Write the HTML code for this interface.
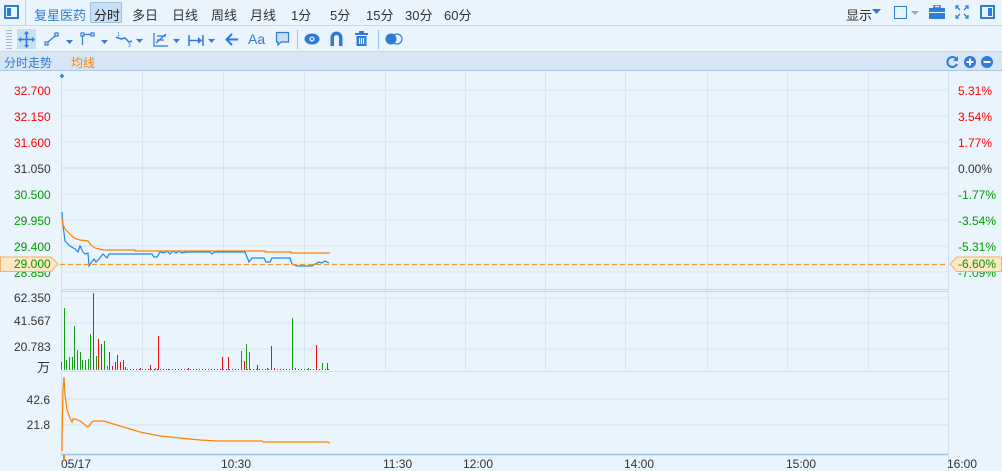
<!DOCTYPE html>
<html><head><meta charset="utf-8"><style>
*{margin:0;padding:0;box-sizing:border-box}
body{width:1002px;height:471px;background:#eaf4fc;font-family:"Liberation Sans","Noto Sans CJK SC",sans-serif;position:relative;overflow:hidden;font-size:12px;color:#333}
.a{position:absolute;white-space:nowrap}
.t1{font-size:13px}
.l{width:36px;text-align:right}
</style></head><body>
<!-- toolbar row 1 -->
<div class="a" style="left:0;top:0;width:1002px;height:26px;border-bottom:1px solid #c5daee"></div>
<div class="a" style="left:25px;top:0;width:1px;height:26px;background:#b8d0e8"></div>
<div class="a" style="left:4px;top:5px;width:15px;height:14px;border:2px solid #2f7bd6"></div>
<div class="a" style="left:7px;top:8px;width:4px;height:8px;background:#2f7bd6"></div>
<div class="a t1" style="left:34px;top:5px;color:#2f7bd6">复星医药</div>
<div class="a" style="left:90px;top:2px;width:32px;height:21px;background:#c8def4;border:1px solid #9fc1e6;border-radius:2px"></div>
<div class="a t1" style="left:94px;top:5px;color:#222">分时</div>
<div class="a t1" style="left:132px;top:5px">多日</div>
<div class="a t1" style="left:172px;top:5px">日线</div>
<div class="a t1" style="left:211px;top:5px">周线</div>
<div class="a t1" style="left:250px;top:5px">月线</div>
<div class="a t1" style="left:291px;top:5px">1分</div>
<div class="a t1" style="left:330px;top:5px">5分</div>
<div class="a t1" style="left:366px;top:5px">15分</div>
<div class="a t1" style="left:405px;top:5px">30分</div>
<div class="a t1" style="left:444px;top:5px">60分</div>
<div class="a t1" style="left:846px;top:5px">显示</div>
<svg class="a" style="left:872px;top:9px" width="9" height="5"><path d="M0 0H9L4.5 5z" fill="#2f7bd6"/></svg>
<div class="a" style="left:894px;top:6px;width:13px;height:13px;border:1.5px solid #2f7bd6"></div>
<svg class="a" style="left:911px;top:11px" width="8" height="4"><path d="M0 0H8L4 4z" fill="#8fa8c4"/></svg>
<svg class="a" style="left:929px;top:5px" width="16" height="15"><rect x="5" y="0" width="6" height="3" fill="none" stroke="#2f7bd6" stroke-width="1.5"/><rect x="0" y="3" width="16" height="11" fill="#2f7bd6"/><rect x="0" y="7" width="16" height="1" fill="#eaf4fc"/></svg>
<svg class="a" style="left:955px;top:5px" width="14" height="14" stroke="#2f7bd6" stroke-width="1.3" fill="none"><path d="M1 4V1H4M10 1H13V4M13 10V13H10M4 13H1V10M2 2L5 5M12 2L9 5M12 12L9 9M2 12L5 9"/></svg>
<div class="a" style="left:980px;top:5px;width:15px;height:14px;border:2px solid #2f7bd6"></div>
<div class="a" style="left:988px;top:8px;width:4px;height:8px;background:#2f7bd6"></div>
<!-- toolbar row 2 -->
<div class="a" style="left:0;top:26px;width:1002px;height:26px;border-bottom:1px solid #c5daee"></div>
<svg class="a" style="left:6px;top:30px" width="6" height="19"><g fill="#9fb6cf"><rect y="0" width="6" height="1"/><rect y="3" width="6" height="1"/><rect y="6" width="6" height="1"/><rect y="9" width="6" height="1"/><rect y="12" width="6" height="1"/><rect y="15" width="6" height="1"/><rect y="18" width="6" height="1"/></g></svg>
<div class="a" style="left:17px;top:29px;width:19px;height:20px;background:#c8def4"></div>
<svg class="a" style="left:18px;top:31px" width="17" height="17" stroke="#2f7bd6" stroke-width="1.6" fill="#2f7bd6"><path d="M8.5 1V16M1 8.5H16" fill="none"/><path d="M8.5 0L6 3H11zM8.5 17L6 14H11zM0 8.5L3 6V11zM17 8.5L14 6V11z" stroke="none"/></svg>
<svg class="a" style="left:44px;top:32px" width="30" height="16" fill="none" stroke="#2f7bd6" stroke-width="1.2"><rect x="1" y="10" width="3" height="3"/><rect x="11" y="1" width="3" height="3"/><path d="M4 10L11 4"/><path d="M22 8H29L25.5 12z" fill="#2f7bd6" stroke="none"/></svg>
<svg class="a" style="left:80px;top:32px" width="30" height="16" fill="none" stroke="#2f7bd6" stroke-width="1.2"><rect x="1" y="1" width="3" height="3"/><rect x="11" y="1" width="3" height="3"/><path d="M4 2.5H11M2.5 4V13"/><path d="M21 8H28L24.5 12z" fill="#2f7bd6" stroke="none"/></svg>
<svg class="a" style="left:115px;top:31px" width="30" height="17" fill="none" stroke="#2f7bd6" stroke-width="1.5"><path d="M1 6L6 8L10 7L14 11L17 10"/><text x="2" y="5" font-size="5" fill="#2f7bd6" stroke="none">1</text><text x="13" y="16" font-size="5" fill="#2f7bd6" stroke="none">3</text><path d="M21 8H28L24.5 12z" fill="#2f7bd6" stroke="none"/></svg>
<svg class="a" style="left:152px;top:31px" width="30" height="17" fill="none" stroke="#2f7bd6" stroke-width="1.2"><path d="M2 2V15H16M4 12L14 3M5 5H14M5 9H12" /><path d="M21 8H28L24.5 12z" fill="#2f7bd6" stroke="none"/></svg>
<svg class="a" style="left:188px;top:32px" width="30" height="16" fill="none" stroke="#2f7bd6" stroke-width="1.5"><path d="M1 3V14M15 3V14M1 8.5H14"/><path d="M14 8.5L10 5V12z" fill="#2f7bd6" stroke="none"/><path d="M20 7H27L23.5 11z" fill="#2f7bd6" stroke="none"/></svg>
<svg class="a" style="left:225px;top:33px" width="14" height="13" fill="none" stroke="#2f7bd6" stroke-width="2"><path d="M13 6.5H2M7 1L1.5 6.5L7 12"/></svg>
<div class="a" style="left:248px;top:31px;font-size:14px;color:#2f7bd6">Aa</div>
<svg class="a" style="left:275px;top:31px" width="15" height="16" fill="#c8def4" stroke="#2f7bd6" stroke-width="1.2"><path d="M1.5 1.5H13.5V11H6L3 14V11H1.5z"/></svg>
<div class="a" style="left:297px;top:30px;width:1px;height:19px;background:#9fc1e6"></div>
<svg class="a" style="left:304px;top:33px" width="16" height="12"><ellipse cx="8" cy="6" rx="7.5" ry="5.5" fill="#2f7bd6"/><circle cx="8" cy="6" r="2.5" fill="#eaf4fc"/><circle cx="8" cy="6" r="1.2" fill="#2f7bd6"/></svg>
<svg class="a" style="left:330px;top:31px" width="13" height="15"><path d="M0.5 15V6.5A6 6 0 0 1 12.5 6.5V15H9V6.5A2.5 2.5 0 0 0 4 6.5V15z" fill="#2f7bd6"/></svg>
<svg class="a" style="left:355px;top:31px" width="13" height="15" fill="#2f7bd6"><rect x="0" y="2" width="13" height="2"/><rect x="4" y="0" width="5" height="2"/><path d="M1.5 5H11.5V15H1.5z"/><g fill="#eaf4fc"><rect x="4" y="7" width="1.2" height="6"/><rect x="6" y="7" width="1.2" height="6"/><rect x="8" y="7" width="1.2" height="6"/></g></svg>
<div class="a" style="left:378px;top:30px;width:1px;height:19px;background:#9fc1e6"></div>
<svg class="a" style="left:385px;top:33px" width="18" height="12"><circle cx="6" cy="6" r="5.5" fill="#2f7bd6"/><circle cx="12" cy="6" r="5" fill="none" stroke="#2f7bd6" stroke-width="1.2"/></svg>
<!-- sub header -->
<div class="a" style="left:0;top:52px;width:1002px;height:19px;background:#d6e6f5;border-bottom:1px solid #a9c6e6"></div>
<div class="a" style="left:4px;top:54px;color:#2f7bd6">分时走势</div>
<div class="a" style="left:71px;top:54px;color:#ff7f00">均线</div>
<svg class="a" style="left:946px;top:55px" width="52" height="14"><path d="M10 3.5A5 5 0 1 0 11 9" fill="none" stroke="#2f7bd6" stroke-width="2"/><path d="M12 1V6H7z" fill="#2f7bd6"/><circle cx="24" cy="7" r="6" fill="#2f7bd6"/><rect x="20.5" y="6" width="7" height="2" fill="#fff"/><rect x="23" y="3.5" width="2" height="7" fill="#fff"/><circle cx="41" cy="7" r="6" fill="#2f7bd6"/><rect x="37.5" y="6" width="7" height="2" fill="#fff"/></svg>
<!-- hidden-under labels -->
<div class="a l" style="left:14px;top:266px;color:#090">28.850</div>
<div class="a" style="left:958px;top:266px;color:#090">-7.09%</div>
<!-- chart -->
<svg class="a" style="left:0;top:0;z-index:1" width="1002" height="471">
<g stroke="#d6e6f4" stroke-width="1">
<path d="M61 90H948M61 116H948M61 142H948M61 194H948M61 220H948M61 246H948M61 272H948"/>
<path d="M61 298H948M61 323H948M61 349H948"/>
<path d="M61 399H948M61 425H948"/>
<path d="M142.5 71V370M223.5 71V370M304.5 71V370M385.5 71V370M465.5 71V370M545.5 71V370M625.5 71V370M707.5 71V370M787.5 71V370M868.5 71V370"/>
</g>
<path d="M61 168H948" stroke="#c6d9ec"/>
<path d="M61.5 71V454M948.5 71V471" stroke="#d0e0f0"/>
<path d="M61 289.5H948M61 291.5H948" stroke="#c2d6ea"/>
<path d="M61 371.5H948" stroke="#d0e0f0"/>
<path d="M61 454.5H948" stroke="#9cc4e8" stroke-width="1.5"/>
<path d="M60 76H64M62 74V78" stroke="#2f7bd6" stroke-width="1.5"/>
<path d="M62 212L63 225L65 241L67 243L70 246L75 249L78 252L80 246L83 252L85 254L88 253L89 266L91 263L94 259L96 262L99 259L103 254L107 258L109 254L152 254L154 257L157 257L160 252L164 253L167 251L170 254L173 251L176 253L179 251L182 253L186 252L210 252L212 254L215 252L245 252L249 262L252 258L264 258L266 262L270 262L272 258L290 258L292 264L297 266L312 266L315 264L319 262L322 263L325 261L329 263" fill="none" stroke="#1e88f0" stroke-width="1.2"/>
<path d="M62 217L63 225L66 230L72 236L74 238L80 240L88 241L91 245L95 248L103 250L135 250L135 251L265 251L265 252L291 252L291 253L330 253" fill="none" stroke="#ff8000" stroke-width="1.2"/>
<path d="M60 264.5H948" stroke="#f0972c" stroke-width="1.2" stroke-dasharray="5,3"/>
<g stroke-width="1">
<g stroke="#13a013"><path d="M61.5 370v-8M64.5 370v-62M66.5 370v-10M69.5 370v-13M72.5 370v-13M74.5 370v-44M77.5 370v-20M80.5 370v-18M82.5 370v-10M85.5 370v-10M88.5 370v-11M90.5 370v-36M96.5 370v-14M104.5 370v-29M107.5 370v-4M241.5 370v-19M246.5 370v-26M249.5 370v-18M267.5 370v-2M292.5 370v-52M295.5 370v-2M322.5 370v-7M308.5 370v-2M155.5 370v-2M175.5 370v-1"/></g>
<g stroke="#ee1111"><path d="M93.5 370v-77M98.5 370v-31M101.5 370v-26M109.5 370v-18M112.5 370v-4M115.5 370v-8M117.5 370v-15M120.5 370v-8M123.5 370v-10M125.5 370v-3M150.5 370v-5M158.5 370v-34M222.5 370v-13M228.5 370v-13M244.5 370v-9M257.5 370v-5M271.5 370v-24M274.5 370v-2M316.5 370v-25M327.5 370v-7M140.5 370v-2M188.5 370v-2M168.5 370v-1"/></g>
<path d="M127 369.5H330" stroke="#ee1111" stroke-dasharray="1,2"/>
</g>
<path d="M62 451L62 439L62.5 414L63 390L64 377L65 395L66 402L67 410L70 418L72 422L73 419L75 419L80 421L84 424L87 427L89 426L92 422L94 421L104 421L110 423L120 426L130 429L140 432L150 434L160 436L180 438L200 440L217 441L262 441L263 442L327 442L330 443" fill="none" stroke="#ff8000" stroke-width="1.2"/>
<path d="M0.5 257H51L58 264L51 271.5H0.5z" fill="#fde7c5" stroke="#f3b066"/>
<path d="M1001.5 257H957L950 264L957 271.5H1001.5z" fill="#fde7c5" stroke="#f3b066"/>
</svg>
<!-- left labels -->
<div style="position:absolute;left:0;top:0;z-index:2">
<div class="a l" style="left:14px;top:84px;color:#f00">32.700</div>
<div class="a l" style="left:14px;top:110px;color:#f00">32.150</div>
<div class="a l" style="left:14px;top:136px;color:#f00">31.600</div>
<div class="a l" style="left:14px;top:162px;color:#333">31.050</div>
<div class="a l" style="left:14px;top:188px;color:#090">30.500</div>
<div class="a l" style="left:14px;top:214px;color:#090">29.950</div>
<div class="a l" style="left:14px;top:240px;color:#090">29.400</div>
<div class="a l" style="left:14px;top:257px;color:#090">29.000</div>
<div class="a l" style="left:14px;top:291px">62.350</div>
<div class="a l" style="left:14px;top:314px">41.567</div>
<div class="a l" style="left:14px;top:340px">20.783</div>
<div class="a" style="left:37px;top:357px;font-size:13px">万</div>
<div class="a l" style="left:14px;top:393px">42.6</div>
<div class="a l" style="left:14px;top:418px">21.8</div>
<!-- right labels -->
<div class="a" style="left:958px;top:84px;color:#f00">5.31%</div>
<div class="a" style="left:958px;top:110px;color:#f00">3.54%</div>
<div class="a" style="left:958px;top:136px;color:#f00">1.77%</div>
<div class="a" style="left:958px;top:162px;color:#333">0.00%</div>
<div class="a" style="left:958px;top:188px;color:#090">-1.77%</div>
<div class="a" style="left:958px;top:214px;color:#090">-3.54%</div>
<div class="a" style="left:958px;top:240px;color:#090">-5.31%</div>
<div class="a" style="left:958px;top:257px;color:#090">-6.60%</div>
<!-- time labels -->
<div class="a" style="left:61px;top:457px">05/17</div>
<div class="a" style="left:221px;top:457px">10:30</div>
<div class="a" style="left:383px;top:457px">11:30</div>
<div class="a" style="left:463px;top:457px">12:00</div>
<div class="a" style="left:624px;top:457px">14:00</div>
<div class="a" style="left:786px;top:457px">15:00</div>
<div class="a" style="left:947px;top:457px">16:00</div>
<div class="a" style="left:63px;top:455px;width:2px;height:4px;background:#ff8000"></div>
</div>
</body></html>
